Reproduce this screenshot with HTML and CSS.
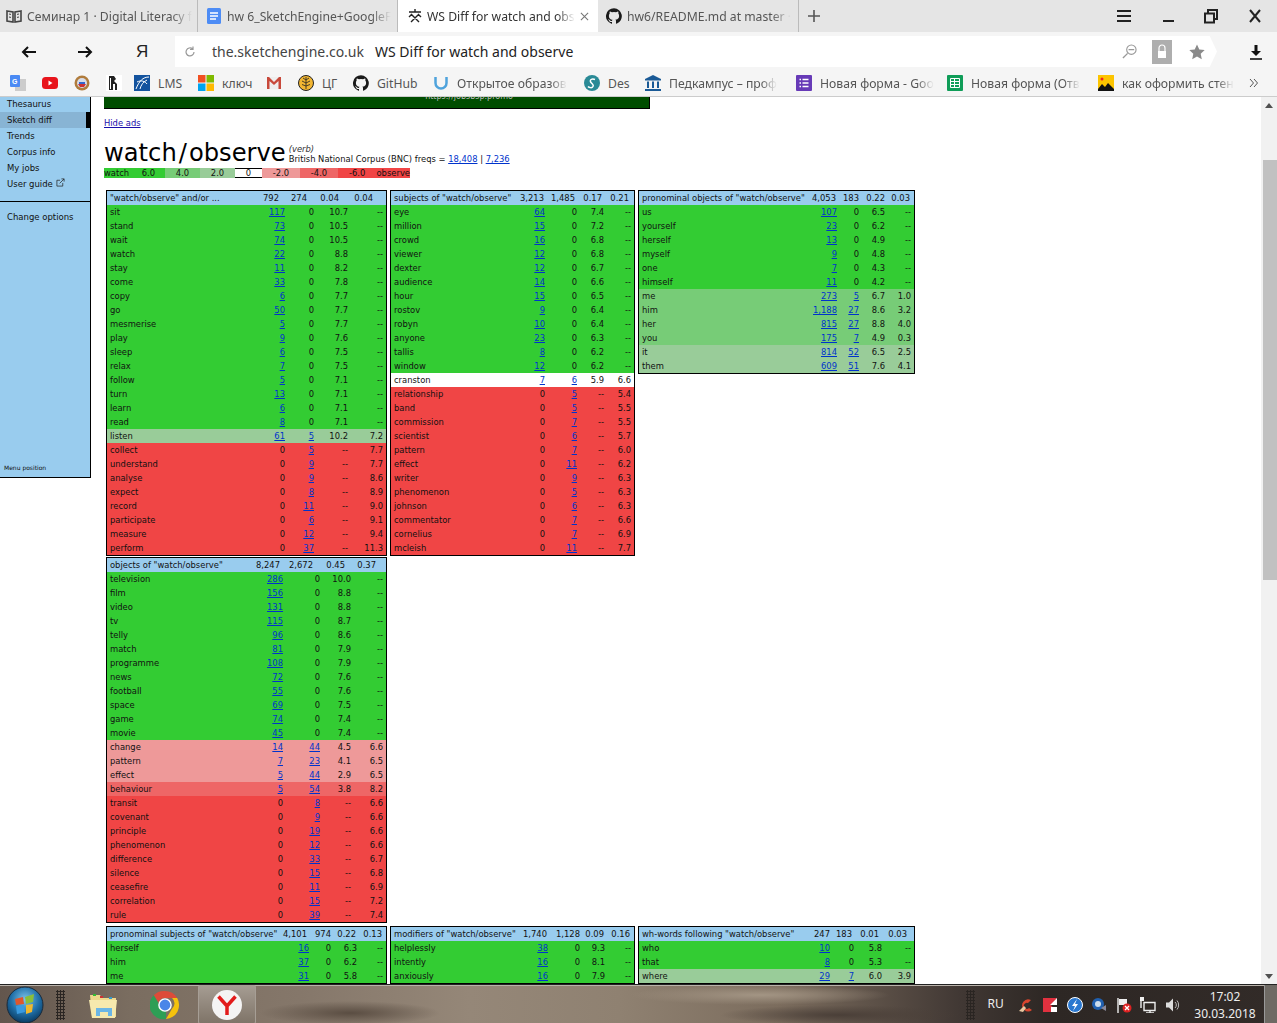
FILE: index.html
```html
<!DOCTYPE html>
<html lang="en">
<head>
    <meta charset="UTF-8">
    <title>WS Diff for watch and observe</title>
    <link rel="stylesheet" href="styles.css">
</head>
<body>
    <!-- browser tabs -->
    <div class="tabbar">
        <div class="tab tab-first">
            <svg class="ico" viewBox="0 0 16 16"><path d="M1 3l6 1v10l-6-1zM15 3l-6 1v10l6-1z" fill="none" stroke="#444" stroke-width="1.6"/><path d="M3 6l2 .4M3 9l2 .4M11 6.400l2-.4M11 9.400l2-.4" stroke="#444"/></svg>
            <span class="tab-title">Семинар 1 · Digital Literacy f</span>
        </div>
        <div class="tab">
            <svg class="ico" viewBox="0 0 16 16"><rect x="1" width="14" height="16" rx="1.500" fill="#4d8cf5"/><path d="M4 5h8M4 8h8M4 11h6" stroke="#fff" stroke-width="1.300"/></svg>
            <span class="tab-title">hw 6_SketchEngine+GoogleF</span>
        </div>
        <div class="tab tab-active">
            <svg class="ico" viewBox="0 0 16 16"><path d="M8 1v3M2 4h12M5 6l-3 3M11 6l3 3M4 14l8-8M12 14L4 6" stroke="#222" stroke-width="1.400" fill="none"/></svg>
            <span class="tab-title">WS Diff for watch and obs</span>
            <svg class="tab-close" viewBox="0 0 10 10"><path d="M1 1l8 8M9 1l-8 8" stroke="#777" stroke-width="1.200"/></svg>
        </div>
        <div class="tab tab-last">
            <svg class="ico" viewBox="0 0 16 16"><use href="#gh"/></svg>
            <span class="tab-title">hw6/README.md at master ·</span>
        </div>
        <svg class="tab-plus" viewBox="0 0 12 12"><path d="M6 0v12M0 6h12" stroke="#555" stroke-width="1.600"/></svg>
        <div class="win-btns">
            <svg viewBox="0 0 16 16"><path d="M1 3h14M1 8h14M1 13h14" stroke="#222" stroke-width="2"/></svg>
            <svg viewBox="0 0 16 16"><path d="M3 13h11" stroke="#222" stroke-width="2"/></svg>
            <svg viewBox="0 0 16 16"><path d="M2 5.500h9v9H2zM5 5V2h9v9h-3" fill="none" stroke="#222" stroke-width="2"/></svg>
            <svg viewBox="0 0 16 16"><path d="M3 2l10 12M13 2L3 14" stroke="#222" stroke-width="2"/></svg>
        </div>
    </div>

    <!-- address bar -->
    <div class="toolbar">
        <svg class="nav-arrow" viewBox="0 0 16 14"><path d="M15 7H2M7 2L2 7l5 5" fill="none" stroke="#111" stroke-width="2"/></svg>
        <svg class="nav-arrow" viewBox="0 0 16 14"><path d="M1 7h13M9 2l5 5-5 5" fill="none" stroke="#111" stroke-width="2"/></svg>
        <span class="ya-letter">Я</span>
        <div class="addr">
            <svg class="reload" viewBox="0 0 12 12"><path d="M10 6a4 4 0 1 1-1.500-3.200M9 .5v3H6" fill="none" stroke="#999" stroke-width="1.200"/></svg>
            <span class="addr-host">the.sketchengine.co.uk</span>
            <span class="addr-title">WS Diff for watch and observe</span>
            <svg class="addr-search" viewBox="0 0 16 16"><circle cx="10" cy="6" r="5" fill="none" stroke="#999" stroke-width="1.200"/><path d="M7 6h6M6 10l-5 5" stroke="#999" stroke-width="1.500"/></svg>
            <span class="addr-lock"><svg viewBox="0 0 12 16"><path d="M3 7V4a3 3 0 0 1 6 0v3" fill="none" stroke="#fff" stroke-width="1.200"/><rect x="2" y="7" width="8" height="7" fill="#fff"/></svg></span>
            <svg class="addr-star" viewBox="0 0 16 16"><path d="M8 .5l2.300 5 5.400.6-4 3.700 1.100 5.400L8 12.500l-4.800 2.700 1.100-5.400-4-3.700 5.400-.6z" fill="#8a8a8a"/></svg>
        </div>
        <svg class="download" viewBox="0 0 14 16"><path d="M7 1v7" stroke="#111" stroke-width="3"/><path d="M2 7h10l-5 5z" fill="#111"/><path d="M1 15h12" stroke="#111" stroke-width="1.600"/></svg>
    </div>

    <!-- bookmarks -->
    <div class="bookmarks">
        <div class="bm bm-i"><svg class="ico" viewBox="0 0 16 16"><rect x="5" y="4" width="11" height="12" fill="#ccc"/><rect width="10" height="12" rx="1" fill="#4a8af4"/><text x="2" y="9" class="ico-g">G</text></svg></div>
        <div class="bm bm-i"><svg class="ico" viewBox="0 0 16 16"><rect y="2" width="16" height="12" rx="3.500" fill="#e8141c"/><path d="M6.500 5.500v5l4-2.500z" fill="#fff"/></svg></div>
        <div class="bm bm-i bm-emblem"><svg class="ico" viewBox="0 0 16 16"><circle cx="8" cy="8" r="7.500" fill="#b07c3c"/><circle cx="8" cy="8" r="5" fill="#d8dce8"/><path d="M4 9h8l-2 3H6z" fill="#c33"/><path d="M5 7h6v2H5z" fill="#36c"/></svg></div>
        <div class="bm bm-i bm-hse"><svg class="ico" viewBox="0 0 16 16"><rect width="16" height="16" fill="#fff"/><path d="M3 1h5l2 3-2 2 3 3v6H9V9H7v6H3z" fill="#222"/><path d="M4.500 3v11M11 10h2v5h-2" stroke="#fff" fill="none"/></svg></div>
        <div class="bm bm-lms"><svg class="ico" viewBox="0 0 16 16"><rect width="16" height="16" fill="#14539e"/><path d="M2 14C5 6 9 2 15 2M6 14c1-4 3-7 7-9M3 7c4-2 8-1 10 2" stroke="#fff" fill="none"/></svg><span>LMS</span></div>
        <div class="bm bm-key"><svg class="ico" viewBox="0 0 16 16"><rect width="7.500" height="7.500" fill="#f25022"/><rect x="8.500" width="7.500" height="7.500" fill="#7fba00"/><rect y="8.500" width="7.500" height="7.500" fill="#00a4ef"/><rect x="8.500" y="8.500" width="7.500" height="7.500" fill="#ffb900"/></svg><span>ключ</span></div>
        <div class="bm bm-i"><svg class="ico" viewBox="0 0 16 16"><rect x="1" y="2" width="14" height="12" fill="#eee"/><path d="M1 14V2h2l5 5 5-5h2v12h-2.500V6L8 10 3.500 6v8z" fill="#c8493b"/></svg></div>
        <div class="bm bm-cg"><svg class="ico" viewBox="0 0 16 16"><circle cx="8" cy="8" r="7.500" fill="#f2b632" stroke="#222"/><path d="M8 2v12M8 5L5 3M8 5l3-2M8 8L4 6M8 8l4-2M8 11L4 9.500M8 11l4-1.500" stroke="#222" stroke-width=".8"/></svg><span>ЦГ</span></div>
        <div class="bm bm-gh"><svg class="ico" viewBox="0 0 16 16"><use href="#gh"/></svg><span>GitHub</span></div>
        <div class="bm bm-long"><svg class="ico" viewBox="0 0 16 16"><path d="M2.500 2v6a5.500 5.500 0 0 0 11 0V2" fill="none" stroke="#4fa3dc" stroke-width="2.500"/></svg><span class="bm-fade">Открытое образов</span></div>
        <div class="bm bm-des"><svg class="ico" viewBox="0 0 16 16"><circle cx="8" cy="8" r="8" fill="#2a8a96"/><path d="M11 4.500C8 3 5 5 7 7.500s3 2 2 4-4 1-5 0" fill="none" stroke="#fff" stroke-width="1.500"/></svg><span>Des</span></div>
        <div class="bm bm-long"><svg class="ico" viewBox="0 0 16 16"><path d="M8 0l8 4v1.500H0V4zM0 14h16v2H0zM2 6.500h2V13H2zM7 6.500h2V13H7zM12 6.500h2V13h-2z" fill="#1a5a96"/></svg><span class="bm-fade">Педкампус – проф</span></div>
        <div class="bm bm-long"><svg class="ico" viewBox="0 0 16 16"><rect width="16" height="16" rx="1" fill="#673ab7"/><path d="M6.500 4.500h6M6.500 8h6M6.500 11.500h6M3.500 4.500h1.500M3.500 8h1.500M3.500 11.500h1.500" stroke="#fff" stroke-width="1.300"/></svg><span class="bm-fade">Новая форма - Goo</span></div>
        <div class="bm bm-long"><svg class="ico" viewBox="0 0 16 16"><rect width="16" height="16" rx="1" fill="#0f9d58"/><path d="M3.500 3.500h9v9h-9zM3.500 6.500h9M3.500 9.500h9M7.500 3.500v9" fill="none" stroke="#fff"/></svg><span class="bm-fade">Новая форма (Отв</span></div>
        <div class="bm bm-long"><svg class="ico" viewBox="0 0 16 16"><rect width="16" height="16" fill="#fcc400"/><path d="M0 14l4-5 3 3 3-4 6 6v2H0z" fill="#111"/><circle cx="4" cy="4" r="1.500" fill="#e22"/></svg><span class="bm-fade">как оформить стен</span></div>
        <svg class="bm-more" viewBox="0 0 10 10"><path d="M1 1l3.500 4L1 9M5 1l3.500 4L5 9" fill="none" stroke="#555"/></svg>
    </div>

    <!-- page inside the browser -->
    <div class="viewport">
        <div class="sidemenu">
            <ul class="menu-list">
                <li class="menu-first">Thesaurus</li>
                <li class="menu-on">Sketch diff</li>
                <li>Trends</li>
                <li>Corpus info</li>
                <li>My jobs</li>
                <li>User guide <svg class="ext-link" viewBox="0 0 10 10"><path d="M7.500 5.500V9H1V2.500h3.500M4 6l5-5M6 1h3v3" fill="none" stroke="#222" stroke-width=".8"/></svg></li>
            </ul>
            <ul class="menu-list menu-second">
                <li>Change options</li>
            </ul>
            <div class="menu-pos">Menu position</div>
        </div>

        <div class="content">
            <div class="adbar"><span class="adbar-text">https://jobsbsp.promo</span></div>
            <a class="hide-ads" href="#">Hide ads</a>

            <div class="title-row">
                <h1>watch<span class="slash">/</span>observe</h1>
                <div class="title-meta">
                    <em>(verb)</em>
                    <span>British National Corpus (BNC) freqs = <a href="#">18,408</a> | <a href="#">7,236</a></span>
                </div>
            </div>

            <div class="legend">
                <span class="lg-watch s6">watch <b>6.0</b></span>
                <span class="lg-box s4">4.0</span>
                <span class="lg-box s2">2.0</span>
                <span class="lg-zero">0</span>
                <span class="lg-neg n2">-2.0</span>
                <span class="lg-neg n4">-4.0</span>
                <span class="lg-obs n6"><b>-6.0</b> observe</span>
            </div>

            <div class="ws-row">
                <table class="ws w-large t-and">
                    <tr><th>"watch/observe" and/or ...</th><th>792</th><th>274</th><th>0.04</th><th>0.04</th></tr>
                    <tr class="s6"><td>sit</td><td><a href="#">117</a></td><td>0</td><td>10.7</td><td>--</td></tr>
                    <tr class="s6"><td>stand</td><td><a href="#">73</a></td><td>0</td><td>10.5</td><td>--</td></tr>
                    <tr class="s6"><td>wait</td><td><a href="#">74</a></td><td>0</td><td>10.5</td><td>--</td></tr>
                    <tr class="s6"><td>watch</td><td><a href="#">22</a></td><td>0</td><td>8.8</td><td>--</td></tr>
                    <tr class="s6"><td>stay</td><td><a href="#">11</a></td><td>0</td><td>8.2</td><td>--</td></tr>
                    <tr class="s6"><td>come</td><td><a href="#">33</a></td><td>0</td><td>7.8</td><td>--</td></tr>
                    <tr class="s6"><td>copy</td><td><a href="#">6</a></td><td>0</td><td>7.7</td><td>--</td></tr>
                    <tr class="s6"><td>go</td><td><a href="#">50</a></td><td>0</td><td>7.7</td><td>--</td></tr>
                    <tr class="s6"><td>mesmerise</td><td><a href="#">5</a></td><td>0</td><td>7.7</td><td>--</td></tr>
                    <tr class="s6"><td>play</td><td><a href="#">9</a></td><td>0</td><td>7.6</td><td>--</td></tr>
                    <tr class="s6"><td>sleep</td><td><a href="#">6</a></td><td>0</td><td>7.5</td><td>--</td></tr>
                    <tr class="s6"><td>relax</td><td><a href="#">7</a></td><td>0</td><td>7.5</td><td>--</td></tr>
                    <tr class="s6"><td>follow</td><td><a href="#">5</a></td><td>0</td><td>7.1</td><td>--</td></tr>
                    <tr class="s6"><td>turn</td><td><a href="#">13</a></td><td>0</td><td>7.1</td><td>--</td></tr>
                    <tr class="s6"><td>learn</td><td><a href="#">6</a></td><td>0</td><td>7.1</td><td>--</td></tr>
                    <tr class="s6"><td>read</td><td><a href="#">8</a></td><td>0</td><td>7.1</td><td>--</td></tr>
                    <tr class="s2"><td>listen</td><td><a href="#">61</a></td><td><a href="#">5</a></td><td>10.2</td><td>7.2</td></tr>
                    <tr class="n6"><td>collect</td><td>0</td><td><a href="#">5</a></td><td>--</td><td>7.7</td></tr>
                    <tr class="n6"><td>understand</td><td>0</td><td><a href="#">9</a></td><td>--</td><td>7.7</td></tr>
                    <tr class="n6"><td>analyse</td><td>0</td><td><a href="#">9</a></td><td>--</td><td>8.6</td></tr>
                    <tr class="n6"><td>expect</td><td>0</td><td><a href="#">8</a></td><td>--</td><td>8.9</td></tr>
                    <tr class="n6"><td>record</td><td>0</td><td><a href="#">11</a></td><td>--</td><td>9.0</td></tr>
                    <tr class="n6"><td>participate</td><td>0</td><td><a href="#">6</a></td><td>--</td><td>9.1</td></tr>
                    <tr class="n6"><td>measure</td><td>0</td><td><a href="#">12</a></td><td>--</td><td>9.4</td></tr>
                    <tr class="n6"><td>perform</td><td>0</td><td><a href="#">37</a></td><td>--</td><td>11.3</td></tr>
                </table>

                <table class="ws w-mid t-subj">
                    <tr><th>subjects of "watch/observe"</th><th>3,213</th><th>1,485</th><th>0.17</th><th>0.21</th></tr>
                    <tr class="s6"><td>eye</td><td><a href="#">64</a></td><td>0</td><td>7.4</td><td>--</td></tr>
                    <tr class="s6"><td>million</td><td><a href="#">15</a></td><td>0</td><td>7.2</td><td>--</td></tr>
                    <tr class="s6"><td>crowd</td><td><a href="#">16</a></td><td>0</td><td>6.8</td><td>--</td></tr>
                    <tr class="s6"><td>viewer</td><td><a href="#">12</a></td><td>0</td><td>6.8</td><td>--</td></tr>
                    <tr class="s6"><td>dexter</td><td><a href="#">12</a></td><td>0</td><td>6.7</td><td>--</td></tr>
                    <tr class="s6"><td>audience</td><td><a href="#">14</a></td><td>0</td><td>6.6</td><td>--</td></tr>
                    <tr class="s6"><td>hour</td><td><a href="#">15</a></td><td>0</td><td>6.5</td><td>--</td></tr>
                    <tr class="s6"><td>rostov</td><td><a href="#">9</a></td><td>0</td><td>6.4</td><td>--</td></tr>
                    <tr class="s6"><td>robyn</td><td><a href="#">10</a></td><td>0</td><td>6.4</td><td>--</td></tr>
                    <tr class="s6"><td>anyone</td><td><a href="#">23</a></td><td>0</td><td>6.3</td><td>--</td></tr>
                    <tr class="s6"><td>tallis</td><td><a href="#">8</a></td><td>0</td><td>6.2</td><td>--</td></tr>
                    <tr class="s6"><td>window</td><td><a href="#">12</a></td><td>0</td><td>6.2</td><td>--</td></tr>
                    <tr class="z0"><td>cranston</td><td><a href="#">7</a></td><td><a href="#">6</a></td><td>5.9</td><td>6.6</td></tr>
                    <tr class="n6"><td>relationship</td><td>0</td><td><a href="#">5</a></td><td>--</td><td>5.4</td></tr>
                    <tr class="n6"><td>band</td><td>0</td><td><a href="#">5</a></td><td>--</td><td>5.5</td></tr>
                    <tr class="n6"><td>commission</td><td>0</td><td><a href="#">7</a></td><td>--</td><td>5.5</td></tr>
                    <tr class="n6"><td>scientist</td><td>0</td><td><a href="#">6</a></td><td>--</td><td>5.7</td></tr>
                    <tr class="n6"><td>pattern</td><td>0</td><td><a href="#">7</a></td><td>--</td><td>6.0</td></tr>
                    <tr class="n6"><td>effect</td><td>0</td><td><a href="#">11</a></td><td>--</td><td>6.2</td></tr>
                    <tr class="n6"><td>writer</td><td>0</td><td><a href="#">9</a></td><td>--</td><td>6.3</td></tr>
                    <tr class="n6"><td>phenomenon</td><td>0</td><td><a href="#">5</a></td><td>--</td><td>6.3</td></tr>
                    <tr class="n6"><td>johnson</td><td>0</td><td><a href="#">6</a></td><td>--</td><td>6.3</td></tr>
                    <tr class="n6"><td>commentator</td><td>0</td><td><a href="#">7</a></td><td>--</td><td>6.6</td></tr>
                    <tr class="n6"><td>cornelius</td><td>0</td><td><a href="#">7</a></td><td>--</td><td>6.9</td></tr>
                    <tr class="n6"><td>mcleish</td><td>0</td><td><a href="#">11</a></td><td>--</td><td>7.7</td></tr>
                </table>

                <table class="ws w-small t-pron">
                    <tr><th>pronominal objects of "watch/observe"</th><th>4,053</th><th>183</th><th>0.22</th><th>0.03</th></tr>
                    <tr class="s6"><td>us</td><td><a href="#">107</a></td><td>0</td><td>6.5</td><td>--</td></tr>
                    <tr class="s6"><td>yourself</td><td><a href="#">23</a></td><td>0</td><td>6.2</td><td>--</td></tr>
                    <tr class="s6"><td>herself</td><td><a href="#">13</a></td><td>0</td><td>4.9</td><td>--</td></tr>
                    <tr class="s6"><td>myself</td><td><a href="#">9</a></td><td>0</td><td>4.8</td><td>--</td></tr>
                    <tr class="s6"><td>one</td><td><a href="#">7</a></td><td>0</td><td>4.3</td><td>--</td></tr>
                    <tr class="s6"><td>himself</td><td><a href="#">11</a></td><td>0</td><td>4.2</td><td>--</td></tr>
                    <tr class="s4"><td>me</td><td><a href="#">273</a></td><td><a href="#">5</a></td><td>6.7</td><td>1.0</td></tr>
                    <tr class="s4"><td>him</td><td><a href="#">1,188</a></td><td><a href="#">27</a></td><td>8.6</td><td>3.2</td></tr>
                    <tr class="s4"><td>her</td><td><a href="#">815</a></td><td><a href="#">27</a></td><td>8.8</td><td>4.0</td></tr>
                    <tr class="s4"><td>you</td><td><a href="#">175</a></td><td><a href="#">7</a></td><td>4.9</td><td>0.3</td></tr>
                    <tr class="s2"><td>it</td><td><a href="#">814</a></td><td><a href="#">52</a></td><td>6.5</td><td>2.5</td></tr>
                    <tr class="s2"><td>them</td><td><a href="#">609</a></td><td><a href="#">51</a></td><td>7.6</td><td>4.1</td></tr>
                </table>
            </div>

            <div class="ws-row ws-row-second">
                <table class="ws w-large t-obj">
                    <tr><th>objects of "watch/observe"</th><th>8,247</th><th>2,672</th><th>0.45</th><th>0.37</th></tr>
                    <tr class="s6"><td>television</td><td><a href="#">286</a></td><td>0</td><td>10.0</td><td>--</td></tr>
                    <tr class="s6"><td>film</td><td><a href="#">156</a></td><td>0</td><td>8.8</td><td>--</td></tr>
                    <tr class="s6"><td>video</td><td><a href="#">131</a></td><td>0</td><td>8.8</td><td>--</td></tr>
                    <tr class="s6"><td>tv</td><td><a href="#">115</a></td><td>0</td><td>8.7</td><td>--</td></tr>
                    <tr class="s6"><td>telly</td><td><a href="#">96</a></td><td>0</td><td>8.6</td><td>--</td></tr>
                    <tr class="s6"><td>match</td><td><a href="#">81</a></td><td>0</td><td>7.9</td><td>--</td></tr>
                    <tr class="s6"><td>programme</td><td><a href="#">108</a></td><td>0</td><td>7.9</td><td>--</td></tr>
                    <tr class="s6"><td>news</td><td><a href="#">72</a></td><td>0</td><td>7.6</td><td>--</td></tr>
                    <tr class="s6"><td>football</td><td><a href="#">55</a></td><td>0</td><td>7.6</td><td>--</td></tr>
                    <tr class="s6"><td>space</td><td><a href="#">69</a></td><td>0</td><td>7.5</td><td>--</td></tr>
                    <tr class="s6"><td>game</td><td><a href="#">74</a></td><td>0</td><td>7.4</td><td>--</td></tr>
                    <tr class="s6"><td>movie</td><td><a href="#">45</a></td><td>0</td><td>7.4</td><td>--</td></tr>
                    <tr class="n2"><td>change</td><td><a href="#">14</a></td><td><a href="#">44</a></td><td>4.5</td><td>6.6</td></tr>
                    <tr class="n2"><td>pattern</td><td><a href="#">7</a></td><td><a href="#">23</a></td><td>4.1</td><td>6.5</td></tr>
                    <tr class="n2"><td>effect</td><td><a href="#">5</a></td><td><a href="#">44</a></td><td>2.9</td><td>6.5</td></tr>
                    <tr class="n4"><td>behaviour</td><td><a href="#">5</a></td><td><a href="#">54</a></td><td>3.8</td><td>8.2</td></tr>
                    <tr class="n6"><td>transit</td><td>0</td><td><a href="#">8</a></td><td>--</td><td>6.6</td></tr>
                    <tr class="n6"><td>covenant</td><td>0</td><td><a href="#">9</a></td><td>--</td><td>6.6</td></tr>
                    <tr class="n6"><td>principle</td><td>0</td><td><a href="#">19</a></td><td>--</td><td>6.6</td></tr>
                    <tr class="n6"><td>phenomenon</td><td>0</td><td><a href="#">12</a></td><td>--</td><td>6.6</td></tr>
                    <tr class="n6"><td>difference</td><td>0</td><td><a href="#">33</a></td><td>--</td><td>6.7</td></tr>
                    <tr class="n6"><td>silence</td><td>0</td><td><a href="#">15</a></td><td>--</td><td>6.8</td></tr>
                    <tr class="n6"><td>ceasefire</td><td>0</td><td><a href="#">11</a></td><td>--</td><td>6.9</td></tr>
                    <tr class="n6"><td>correlation</td><td>0</td><td><a href="#">15</a></td><td>--</td><td>7.2</td></tr>
                    <tr class="n6"><td>rule</td><td>0</td><td><a href="#">39</a></td><td>--</td><td>7.4</td></tr>
                </table>
            </div>

            <div class="ws-row ws-row-third">
                <table class="ws w-large t-psub">
                    <tr><th>pronominal subjects of "watch/observe"</th><th>4,101</th><th>974</th><th>0.22</th><th>0.13</th></tr>
                    <tr class="s6"><td>herself</td><td><a href="#">16</a></td><td>0</td><td>6.3</td><td>--</td></tr>
                    <tr class="s6"><td>him</td><td><a href="#">37</a></td><td>0</td><td>6.2</td><td>--</td></tr>
                    <tr class="s6"><td>me</td><td><a href="#">31</a></td><td>0</td><td>5.8</td><td>--</td></tr>
                </table>
                <table class="ws w-mid t-mod">
                    <tr><th>modifiers of "watch/observe"</th><th>1,740</th><th>1,128</th><th>0.09</th><th>0.16</th></tr>
                    <tr class="s6"><td>helplessly</td><td><a href="#">38</a></td><td>0</td><td>9.3</td><td>--</td></tr>
                    <tr class="s6"><td>intently</td><td><a href="#">16</a></td><td>0</td><td>8.1</td><td>--</td></tr>
                    <tr class="s6"><td>anxiously</td><td><a href="#">16</a></td><td>0</td><td>7.9</td><td>--</td></tr>
                </table>
                <table class="ws w-small t-wh">
                    <tr><th>wh-words following "watch/observe"</th><th>247</th><th>183</th><th>0.01</th><th>0.03</th></tr>
                    <tr class="s6"><td>who</td><td><a href="#">10</a></td><td>0</td><td>5.8</td><td>--</td></tr>
                    <tr class="s6"><td>that</td><td><a href="#">8</a></td><td>0</td><td>5.3</td><td>--</td></tr>
                    <tr class="s2"><td>where</td><td><a href="#">29</a></td><td><a href="#">7</a></td><td>6.0</td><td>3.9</td></tr>
                </table>
            </div>
        </div>

        <div class="scrollbar">
            <span class="sb-up"></span>
            <span class="sb-thumb"></span>
            <span class="sb-down"></span>
        </div>
    </div>

    <!-- windows taskbar -->
    <div class="taskbar">
        <svg class="orb" viewBox="0 0 38 38">
            <defs>
                <radialGradient id="orbfill" cx="50%" cy="35%" r="65%"><stop offset="0" stop-color="#7fc4ea"/><stop offset=".6" stop-color="#1f6fa8"/><stop offset="1" stop-color="#0b3a60"/></radialGradient>
            </defs>
            <circle cx="19" cy="19" r="18" fill="url(#orbfill)" stroke="#1a2a3a"/>
            <path d="M9 13l8-2 1 7-8 1z" fill="#e0562c"/>
            <path d="M19 11l9-3-1 8-7 2z" fill="#8abf3a"/>
            <path d="M10 20l8-1 1 7-8 2z" fill="#3a9ae0"/>
            <path d="M20 19l7-1-1 8-6 2z" fill="#f0b82e"/>
        </svg>
        <span class="grip"></span>
        <svg class="tb-app tb-folder" viewBox="0 0 32 32"><path d="M2 6h10l2 3h14v19H4z" fill="#eed98c"/><path d="M1 11h28l-2 18H4z" fill="#f6e9ae"/><rect x="5" y="5" width="3" height="2" fill="#3b3"/><rect x="12" y="7" width="3" height="2" fill="#c33"/><rect x="21" y="8" width="3" height="2" fill="#39c"/><path d="M8 27v-8h16v8h-4v-4h-8v4z" fill="#6bb6e6"/></svg>
        <svg class="tb-app tb-chrome" viewBox="0 0 32 32"><path d="M16 1a15 15 0 0 1 13 7.500H16a7.500 7.500 0 0 0-7 4.500L4 5.500A15 15 0 0 1 16 1z" fill="#dd4b39"/><path d="M29 8.500A15 15 0 0 1 17 31l6.500-11a7.500 7.500 0 0 0 0-11.500z" fill="#f4c20d"/><path d="M4 5.500l6.500 11a7.500 7.500 0 0 0 6.500 6L17 31A15 15 0 0 1 4 5.500z" fill="#2e9e55"/><circle cx="16" cy="16" r="6.500" fill="#4a86e8" stroke="#fff" stroke-width="1.500"/></svg>
        <div class="tb-active"><svg class="tb-ya" viewBox="0 0 32 32"><circle cx="16" cy="16" r="15" fill="#f4f4f4"/><path d="M7.500 7.500L16 17v9M24.500 7.500L16 17" fill="none" stroke="#e21b1b" stroke-width="3.500"/></svg></div>
        <div class="tray">
            <span class="grip"></span>
            <span class="tray-lang">RU</span>
            <svg class="tray-ico" viewBox="0 0 16 16"><path d="M13 3A6 6 0 1 0 14 13l-3-2a3 3 0 1 1-1-5z" fill="#d8452e"/><path d="M1 14l5-5 2 2-3 4z" fill="#e8c8a0"/></svg>
            <svg class="tray-ico" viewBox="0 0 16 16"><path d="M1 1h14L9 8l6 7H1z" fill="#e0313f"/><path d="M8 8l7-7v7zM9 10h6v5H9z" fill="#fff"/></svg>
            <svg class="tray-ico" viewBox="0 0 16 16"><circle cx="8" cy="8" r="7.500" fill="#2a78d0" stroke="#fff"/><path d="M10 2L5 9h3l-2 5 5-7H8z" fill="#fff"/></svg>
            <svg class="tray-ico" viewBox="0 0 16 16"><circle cx="7" cy="7" r="6" fill="#2060b0"/><circle cx="7" cy="7" r="3" fill="#cde"/><path d="M10 11l5-3v6z" fill="#889"/></svg>
            <svg class="tray-ico" viewBox="0 0 16 16"><path d="M2 1v15" stroke="#eee" stroke-width="1.400"/><path d="M3 2h8v6H3z" fill="#eee"/><circle cx="11" cy="11" r="4.500" fill="#d22"/><path d="M9 9l4 4M13 9l-4 4" stroke="#fff" stroke-width="1.300"/></svg>
            <svg class="tray-ico" viewBox="0 0 16 16"><path d="M4 5.500h11v8H4zM1 1v10M10 14v2M6 16h8" fill="none" stroke="#eee" stroke-width="1.400"/><rect x="0" y="0" width="4" height="4" fill="#eee"/></svg>
            <svg class="tray-ico" viewBox="0 0 16 16"><path d="M1 5.500h3l4-4v13l-4-4H1z" fill="#ddd"/><path d="M10 5a4 4 0 0 1 0 6M12 3.500a7 7 0 0 1 0 9" fill="none" stroke="#bbb"/></svg>
            <div class="clock"><span>17:02</span><span>30.03.2018</span></div>
            <span class="show-desktop"></span>
        </div>
    </div>

    <svg class="svg-defs" viewBox="0 0 16 16"><defs><path id="gh" d="M8 .2a8 8 0 0 0-2.500 15.600c.4.100.5-.2.500-.4v-1.400c-2.200.5-2.700-1-2.700-1-.4-.9-.9-1.200-.9-1.200-.7-.5.100-.5.100-.5.800.1 1.200.8 1.200.8.700 1.200 1.900.9 2.300.7.100-.5.300-.9.500-1.100-1.800-.2-3.600-.9-3.600-4 0-.9.300-1.600.8-2.100-.1-.2-.4-1 .1-2.100 0 0 .7-.2 2.200.8a7.600 7.600 0 0 1 4 0c1.500-1 2.200-.8 2.200-.8.400 1.100.2 1.900.1 2.100.5.600.8 1.300.8 2.100 0 3.100-1.900 3.700-3.700 3.900.3.300.6.700.6 1.500v2.200c0 .2.100.5.600.4A8 8 0 0 0 8 .2z" fill="#1a1a1a"/></defs></svg>
</body>
</html>
```

FILE: styles.css
```css
* {
    box-sizing: border-box;
}
html, body {
    margin: 0;
    height: 1023px;
    overflow: hidden;
}
body {
    display: flex;
    flex-direction: column;
    font-family: "Noto Sans", "Open Sans", sans-serif;
    background-color: white;
}
.svg-defs {
    display: none;
}
.ico {
    width: 16px;
    height: 16px;
    flex: none;
}
.ico-g {
    font-family: "Liberation Sans", sans-serif;
    font-size: 7px;
    font-weight: bold;
    fill: white;
}

/* tabs */
.tabbar {
    display: flex;
    align-items: center;
    height: 32px;
    background-color: #e5e5e5;
    flex: none;
}
.tab {
    display: flex;
    align-items: center;
    gap: 5px;
    width: 200px;
    height: 32px;
    padding-left: 8px;
    border-right: 1px solid #bbb;
    font-size: 12.2px;
    color: #555;
}
.tab-first {
    width: 198px;
    padding-left: 6px;
}
.tab-active {
    background-color: white;
    padding-left: 9px;
    gap: 4px;
    border-right: none;
    color: #333;
    position: relative;
}
.tab-last {
    gap: 5px;
    width: 201px;
}
.tab-title {
    white-space: nowrap;
    -webkit-mask-image: linear-gradient(to right, black 88%, transparent 100%);
    mask-image: linear-gradient(to right, black 88%, transparent 100%);
}
.tab-close {
    position: absolute;
    right: 9px;
    top: 12px;
    width: 9px;
    height: 9px;
}
.tab-plus {
    width: 12px;
    height: 12px;
    margin-left: 9px;
}
.win-btns {
    display: flex;
    gap: 27.7px;
    margin-left: auto;
    margin-right: 14px;
}
.win-btns svg {
    width: 16px;
    height: 16px;
    display: block;
}

/* address bar */
.toolbar {
    display: flex;
    align-items: center;
    height: 35px;
    background-color: #f5f5f5;
    flex: none;
    padding: 4px 0 0 21px;
}
.nav-arrow {
    width: 16px;
    height: 14px;
    margin-right: 40px;
}
.ya-letter {
    width: 42px;
    padding-left: 3px;
    font-family: "Liberation Sans", sans-serif;
    font-size: 17px;
    color: #222;
}
.addr {
    display: flex;
    align-items: center;
    width: 1042px;
    height: 31px;
    background-color: white;
    clip-path: polygon(0 0, 99.3% 0, 100% 50%, 99.3% 100%, 0 100%);
    font-size: 14px;
    color: #444;
}
.reload {
    width: 12px;
    height: 12px;
    margin-left: 9px;
}
.addr-host {
    margin-left: 16px;
    width: 163px;
    white-space: nowrap;
}
.addr-title {
    color: #222;
    white-space: nowrap;
}
.addr-search {
    width: 15px;
    height: 15px;
    margin-left: auto;
}
.addr-lock {
    display: flex;
    align-items: center;
    justify-content: center;
    width: 20px;
    height: 24px;
    margin-left: 15px;
    background-color: #aeaeae;
}
.addr-lock svg {
    width: 12px;
    height: 16px;
}
.addr-star {
    width: 16px;
    height: 16px;
    margin: 0 12px 0 17px;
}
.download {
    width: 14px;
    height: 16px;
    margin-left: 32px;
}

/* bookmarks */
.bookmarks {
    display: flex;
    align-items: center;
    height: 30px;
    padding: 3px 0 0 10px;
    background-color: #f5f5f5;
    border-bottom: 1px solid #ccc;
    flex: none;
    font-size: 12.2px;
    color: #555;
}
.bm {
    display: flex;
    align-items: center;
    flex: none;
    white-space: nowrap;
}
.bm span {
    margin-left: 8px;
}
.bm-fade {
    -webkit-mask-image: linear-gradient(to right, black 85%, transparent 100%);
    mask-image: linear-gradient(to right, black 85%, transparent 100%);
}
.bm-i { width: 32px; }
.bm-emblem { width: 32px; }
.bm-hse { width: 28px; }
.bm-lms { width: 64px; }
.bm-key { width: 68px; }
.bm-cg { width: 55px; }
.bm-gh { width: 80px; }
.bm-des { width: 61px; }
.bm-long { width: 151px; }
.bm-more {
    width: 10px;
    height: 10px;
}

/* page */
.viewport {
    display: flex;
    flex: none;
    height: 887px;
    overflow: hidden;
    background-color: white;
}
.sidemenu {
    display: flex;
    flex-direction: column;
    width: 91px;
    height: 381px;
    flex: none;
    background-color: #99ccee;
    border-right: 1px solid black;
    border-bottom: 1px solid black;
    font-family: "DejaVu Sans", sans-serif;
    font-size: 8.5px;
    color: #111;
}
.menu-list {
    list-style: none;
    margin: 0;
    padding: 0;
}
.menu-list li {
    height: 16px;
    line-height: 16px;
    padding-left: 7px;
    white-space: nowrap;
}
.menu-list .menu-first {
    height: 15px;
    line-height: 14px;
}
.menu-list .menu-on {
    background-color: #88b4d4;
    border-right: 4px solid black;
}
.menu-second {
    margin-top: 9px;
    padding-top: 7px;
    border-top: 1px solid black;
}
.ext-link {
    width: 9px;
    height: 9px;
}
.menu-pos {
    margin-top: auto;
    padding: 0 0 6px 4px;
    font-size: 6px;
}
.content {
    flex: 1;
    padding-left: 13px;
    min-width: 0;
    overflow: hidden;
    font-family: "DejaVu Sans", sans-serif;
    font-size: 8.4px;
    color: #111;
}
.adbar {
    width: 546px;
    height: 12px;
    background-color: #004d00;
    border-right: 1px solid black;
    border-bottom: 1px solid black;
    color: #bbb;
    font-size: 8px;
    line-height: 0;
    text-align: center;
    overflow: hidden;
}
.adbar-text {
    margin-left: 185px;
}
.hide-ads {
    display: block;
    margin-top: 9px;
    line-height: 11px;
    color: #1a0dab;
}
.title-row {
    display: flex;
    height: 26px;
    margin-top: 8px;
}
h1 {
    margin: 0;
    font-family: "DejaVu Sans", sans-serif;
    font-weight: normal;
    font-size: 24.2px;
    line-height: 32px;
    color: black;
}
.slash {
    margin: 0 2px;
}
.title-meta {
    display: flex;
    flex-direction: column;
    justify-content: flex-end;
    height: 27px;
    margin-left: 3px;
    line-height: 10px;
}
.title-meta em {
    color: #333;
}
.title-meta a, .ws a {
    color: #0033cc;
}
.legend {
    display: flex;
    height: 10px;
    margin-top: 5px;
    line-height: 10px;
    color: #111;
}
.legend span {
    display: flex;
    justify-content: center;
}
.legend b {
    font-weight: normal;
}
.legend .lg-watch {
    width: 61px;
    justify-content: space-between;
    padding-right: 10px;
}
.lg-box {
    width: 35px;
}
.lg-zero {
    width: 27px;
    background-color: white;
    border-top: 1px solid black;
    border-bottom: 1px solid black;
    line-height: 8px;
}
.lg-neg {
    width: 38px;
}
.legend .lg-obs {
    width: 72px;
    justify-content: space-between;
    padding-left: 11px;
}
.s6 { background-color: #33cc33; }
.s4 { background-color: #77cc77; }
.s2 { background-color: #99cc99; }
.z0 { background-color: white; }
.n2 { background-color: #ee9999; }
.n4 { background-color: #ee6666; }
.n6 { background-color: #f04545; }

/* word sketch tables */
.ws-row {
    display: flex;
    align-items: flex-start;
    gap: 3px;
    margin: 12px 0 0 2px;
}
.ws-row-second {
    margin-top: 1px;
}
.ws-row-third {
    margin-top: 3px;
}
.ws {
    table-layout: fixed;
    border-collapse: separate;
    border-spacing: 0;
    border: 1px solid black;
    flex: none;
}
.w-large { width: 281px; }
.w-mid { width: 245px; }
.w-small { width: 277px; }
.ws th, .ws td {
    height: 14px;
    padding: 0 3px 0 0;
    line-height: 14px;
    font-weight: normal;
    text-align: right;
    white-space: nowrap;
    color: #111;
}
.ws th {
    background-color: #99ccee;
}
.ws th:first-child, .ws td:first-child {
    padding-left: 3px;
    text-align: left;
}
.ws th:nth-child(2) { width: 30px; padding-right: var(--h2); }
.ws th:nth-child(3) { width: var(--c3); padding-right: var(--h3); }
.ws th:nth-child(4) { width: var(--c4); padding-right: var(--h4); }
.ws th:nth-child(5) { width: var(--c5); padding-right: var(--h5); }
.t-and { --c3: 29px; --c4: 34px; --c5: 35px; --h2: 9px; --h3: 10px; --h4: 12px; --h5: 13px; }
.t-subj { --c3: 32px; --c4: 27px; --c5: 27px; --h2: 4px; --h3: 5px; --h4: 5px; --h5: 5px; }
.t-pron { --c3: 22px; --c4: 26px; --c5: 26px; --h2: 4px; --h3: 3px; --h4: 3px; --h5: 4px; }
.t-obj { --c3: 37px; --c4: 31px; --c5: 32px; --h2: 9px; --h3: 10px; --h4: 9px; --h5: 10px; }
.t-psub { --c3: 22px; --c4: 26px; --c5: 26px; --h2: 5px; --h3: 3px; --h4: 4px; --h5: 4px; }
.t-mod { --c3: 32px; --c4: 25px; --c5: 26px; --h2: 4px; --h3: 3px; --h4: 4px; --h5: 4px; }
.t-wh { --c3: 24px; --c4: 28px; --c5: 29px; --h2: 3px; --h3: 5px; --h4: 6px; --h5: 7px; }

/* page scrollbar */
.scrollbar {
    display: flex;
    flex-direction: column;
    align-items: center;
    width: 16px;
    flex: none;
    background-color: #f1f1f1;
}
.sb-up, .sb-down {
    width: 0;
    height: 0;
    border-left: 4px solid transparent;
    border-right: 4px solid transparent;
}
.sb-up {
    margin-top: 6px;
    border-bottom: 5px solid #505050;
}
.sb-thumb {
    width: 14px;
    height: 420px;
    margin-top: 52px;
    margin-left: 1px;
    background-color: #c1c1c1;
}
.sb-down {
    margin-top: auto;
    margin-bottom: 5px;
    border-top: 5px solid #505050;
}

/* taskbar */
.taskbar {
    display: flex;
    align-items: center;
    flex: 1;
    border-top: 1px solid #222;
    box-shadow: inset 0 1px 0 #b9b2aa;
    background-image:
        radial-gradient(ellipse 90px 12px at 350px 28px, #5a4d42, transparent),
        radial-gradient(ellipse 130px 10px at 760px 10px, #a39584, transparent),
        radial-gradient(ellipse 120px 10px at 840px 30px, #4a3f38, transparent),
        linear-gradient(to right, #63564d 0, #7a6d60 130px, #85776a 300px, #958778 470px, #8f8171 620px, #7b6c5d 780px, #413834 960px, #2d2724 1050px, #322b28 1277px);
    color: #eee;
    font-family: "Noto Sans", sans-serif;
}
.orb {
    width: 38px;
    height: 38px;
    margin-left: 6px;
    flex: none;
}
.grip {
    width: 9px;
    height: 30px;
    margin-left: 12px;
    flex: none;
    background-image: radial-gradient(circle, #2a2522 1px, transparent 1.200px);
    background-size: 3px 3px;
}
.tb-app {
    flex: none;
}
.tb-folder {
    width: 32px;
    height: 32px;
    margin-left: 23px;
}
.tb-chrome {
    width: 30px;
    height: 30px;
    margin-left: 30px;
}
.tb-active {
    display: flex;
    align-items: center;
    justify-content: center;
    width: 58px;
    height: 39px;
    margin-left: 18px;
    flex: none;
    border: 1px solid #a69e95;
    border-radius: 2px;
    background-image: linear-gradient(#a59c92, #7f7468);
}
.tb-ya {
    width: 32px;
    height: 32px;
}
.tray {
    display: flex;
    align-items: center;
    margin-left: auto;
    height: 100%;
}
.tray .grip {
    margin-right: 13px;
}
.tray-lang {
    width: 30px;
    font-size: 12px;
    margin-bottom: 3px;
}
.tray-ico {
    width: 16px;
    height: 16px;
    margin-right: 8.500px;
    flex: none;
}
.clock {
    display: flex;
    flex-direction: column;
    align-items: center;
    width: 64px;
    margin-left: 4px;
    font-size: 12px;
    line-height: 17px;
}
.show-desktop {
    width: 13px;
    height: 100%;
    margin-left: 7px;
    background-color: #6e6a64;
    border-left: 1px solid #999;
}
```
